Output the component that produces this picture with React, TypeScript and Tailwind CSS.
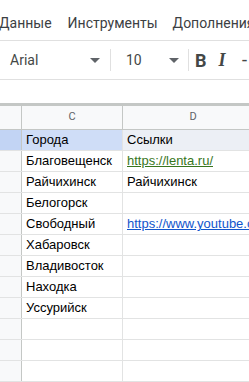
import React from 'react';

const cities = [
  { city: 'Благовещенск', link: 'https://lenta.ru/', kind: 'green' },
  { city: 'Райчихинск', link: 'Райчихинск', kind: 'text' },
  { city: 'Белогорск', link: '', kind: 'text' },
  { city: 'Свободный', link: 'https://www.youtube.com/', kind: 'blue' },
  { city: 'Хабаровск', link: '', kind: 'text' },
  { city: 'Владивосток', link: '', kind: 'text' },
  { city: 'Находка', link: '', kind: 'text' },
  { city: 'Уссурийск', link: '', kind: 'text' },
  { city: '', link: '', kind: 'text' },
  { city: '', link: '', kind: 'text' },
  { city: '', link: '', kind: 'text' },
];

function Caret() {
  return (
    <svg width="10" height="5" viewBox="0 0 10 5" className="shrink-0">
      <path d="M0 0h10L5 5z" fill="#5f6368" />
    </svg>
  );
}

export default function App() {
  return (
    <div className="w-[249px] h-[382px] overflow-hidden bg-white font-['Liberation_Sans',Arial,sans-serif]">
      {/* menu */}
      <div className="h-[40px] flex items-end pb-[6px] text-[14px] text-[#3c4043] font-['Roboto',sans-serif] whitespace-nowrap">
        <span className="-ml-[1px] shrink-0">Данные</span>
        <span className="ml-[16px] shrink-0">Инструменты</span>
        <span className="ml-[15px] shrink-0">Дополнения</span>
      </div>

      {/* toolbar */}
      <div className="h-[40px] border-y border-[#e0e0e0] flex items-center text-[#444746] whitespace-nowrap">
        <span className="ml-[10px] w-[80px] shrink-0 text-[14px] font-['Roboto',sans-serif]">Arial</span>
        <Caret />
        <div className="ml-[10px] w-px h-[22px] shrink-0 bg-[#e0e0e0]" />
        <span className="ml-[15px] w-[43px] shrink-0 text-[14px] font-['Roboto',sans-serif]">10</span>
        <Caret />
        <div className="ml-[9px] w-px h-[22px] shrink-0 bg-[#e0e0e0]" />
        <span className="ml-[6px] shrink-0 text-[18px] font-bold font-['Roboto',sans-serif]">B</span>
        <span className="ml-[12px] shrink-0 text-[18px] font-bold italic font-['Liberation_Serif',serif]">I</span>
        <span className="ml-[16px] shrink-0 text-[18px]">-</span>
      </div>

      {/* formula area */}
      <div className="h-[23px]" />

      {/* grid */}
      <div className="border-t-[3px] border-[#c4c7c5]">
        <div className="flex h-[24px] bg-[#f8f9fa] border-b border-[#c4c7c5] text-[11px] text-[#5f6368] font-['Roboto',sans-serif]">
          <div className="w-[22px] shrink-0 border-r border-[#c4c7c5]" />
          <div className="w-[101px] shrink-0 border-r border-[#c4c7c5] flex items-center justify-center">C</div>
          <div className="w-[141px] shrink-0 border-r border-[#c4c7c5] flex items-center justify-center">D</div>
        </div>

        <div className="flex h-[21px] border-b border-[#e2e3e3] text-[13px] text-[#000]">
          <div className="w-[22px] shrink-0 bg-[#c2d4f4] border-r border-[#c4c7c5]" />
          <div className="w-[101px] shrink-0 bg-[#cfddf7] border-r border-[#e2e3e3] pl-[4px] flex items-center">Города</div>
          <div className="w-[141px] shrink-0 bg-[#eceff5] pl-[4px] flex items-center">Ссылки</div>
        </div>

        {cities.map((r, i) => (
          <div key={i} className="flex h-[21px] border-b border-[#e2e3e3] text-[13px] text-[#000]">
            <div className="w-[22px] shrink-0 bg-[#f8f9fa] border-r border-[#c4c7c5]" />
            <div className="w-[101px] shrink-0 border-r border-[#e2e3e3] pl-[4px] flex items-center whitespace-nowrap">{r.city}</div>
            <div className="w-[141px] shrink-0 pl-[4px] flex items-center whitespace-nowrap">
              {r.kind === 'green' && <span className="text-[#38761d] underline">{r.link}</span>}
              {r.kind === 'blue' && <span className="text-[#1155cc] underline">{r.link}</span>}
              {r.kind === 'text' && r.link}
            </div>
          </div>
        ))}
      </div>
    </div>
  );
}
